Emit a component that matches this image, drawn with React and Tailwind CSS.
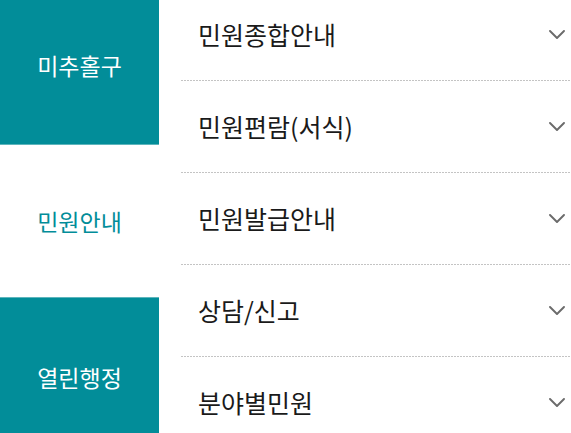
import React from "react";

const font = { fontFamily: '"Noto Sans CJK KR", "Noto Sans", sans-serif' };

function Chevron() {
  return (
    <svg width="16" height="9" viewBox="0 0 16 9" fill="none" className="shrink-0">
      <path d="M1 1L8 8L15 1" stroke="#6b6b6b" strokeWidth="1.9" strokeLinecap="round" strokeLinejoin="round" />
    </svg>
  );
}

const items = ["민원종합안내", "민원편람(서식)", "민원발급안내", "상담/신고", "분야별민원"];

export default function App() {
  return (
    <div className="w-[571px] h-[433px] overflow-hidden bg-white flex" style={font}>
      <div className="w-[159px] shrink-0 flex flex-col">
        <div className="h-[145px] shrink-0 bg-[#028d99] border-b border-[#5db5bc] flex items-center justify-center pb-[14px] text-white text-[23px]">
          미추홀구
        </div>
        <div className="h-[152px] shrink-0 bg-white flex items-center justify-center text-[#028d99] text-[23px]">
          민원안내
        </div>
        <div className="h-[152px] shrink-0 bg-[#028d99] border-t border-[#5db5bc] flex items-center justify-center pt-[8px] text-white text-[23px]">
          열린행정
        </div>
      </div>
      <div className="flex-1 flex flex-col -mt-[11px] pl-[22px]">
        {items.map((t, i) => (
          <React.Fragment key={t}>
            <div className="h-[91px] shrink-0 flex items-center justify-between pl-[17px] pr-[6px]">
              <span className="text-[25px] text-[#1a1a1a] pt-[1px]">{t}</span>
              <Chevron />
            </div>
            {i < items.length - 1 && (
              <div className="h-px shrink-0 bg-[linear-gradient(to_right,#c4c4c4_2px,transparent_2px)] bg-[length:3px_1px]" />
            )}
          </React.Fragment>
        ))}
      </div>
    </div>
  );
}
